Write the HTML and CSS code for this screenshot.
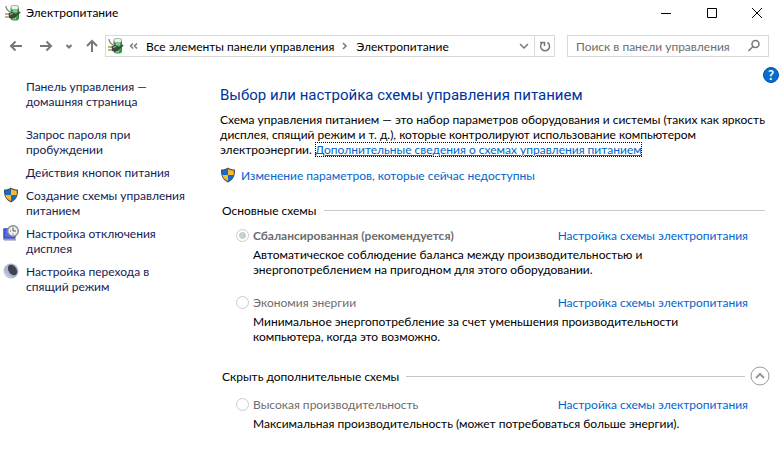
FILE: index.html
```html
<!DOCTYPE html>
<html lang="ru">
<head>
    <meta charset="UTF-8">
    <meta name="viewport" content="width=device-width, initial-scale=1.0">
    <title>Электропитание</title>
    <link rel="stylesheet" href="styles.css">
</head>

<body>
    <!-- Shared icons -->
    <svg class="sprite" aria-hidden="true">
        <symbol id="power" viewBox="0 0 16 16">
            <rect x="5.500" y="1" width="8.500" height="14.500" rx="3" fill="#3f7a46"/>
            <rect x="6.500" y="3" width="6.500" height="11.500" rx="2" fill="#2fae3f"/>
            <path d="M10 4.500v3M9 12v2.500" stroke="#6fe078" stroke-width="4"/>
            <rect x="6" y=".4" width="7.500" height="4.300" rx="2" fill="#eef3ee" stroke="#8b9a8b" stroke-width=".8"/>
            <path d="M1 1c0 3 1 4 4 6" fill="none" stroke="#777" stroke-width="1.200"/>
            <path d="M0 9h5M0 12h5" stroke="#b09a48" stroke-width="1.400"/>
            <path d="M3.500 8.500l3-1.500 3 1 1 1 4-2.500 1.200 1-4 3.500-2 2-3 .8-2.500-.8z" fill="#444"/>
            <path d="M5 9.500l3-1" stroke="#bbb"/>
        </symbol>
        <symbol id="shield" viewBox="0 0 16 16">
            <path d="M8 0.500C6 2 4 2.500 1 2.500C.8 8 2 12.500 8 15.500C14 12.500 15.200 8 15 2.500C12 2.500 10 2 8 .5z" fill="#4a4f55"/>
            <path d="M7.700 2C6 3 4 3.600 2.200 3.700L2.300 8H7.700z" fill="#0f6fd0"/>
            <path d="M8 2C10 3 12 3.600 13.800 3.700L13.700 8H8z" fill="#fdb82c"/>
            <path d="M2.300 8H8v6.200C4.500 12.500 2.800 10.500 2.300 8z" fill="#fdb82c"/>
            <path d="M8 8h5.700c-.5 2.500-2.200 4.500-5.700 6.200z" fill="#0f6fd0"/>
        </symbol>
    </svg>

    <header class="titlebar">
        <svg class="icon"><use href="#power"/></svg>
        <span class="title">Электропитание</span>
        <div class="window-buttons">
            <button type="button" aria-label="Свернуть"><svg viewBox="0 0 12 12"><path d="M1 6.500h10"/></svg></button>
            <button type="button" aria-label="Развернуть"><svg viewBox="0 0 12 12"><path d="M1.500 1.500h9v9h-9z"/></svg></button>
            <button type="button" aria-label="Закрыть"><svg viewBox="0 0 12 12"><path d="M1 1l10 10M11 1L1 11"/></svg></button>
        </div>
    </header>

    <nav class="navbar">
        <div class="history">
            <button type="button" aria-label="Назад"><svg viewBox="0 0 14 14"><path d="M13 7H2M6.500 2.500L2 7l4.500 4.500"/></svg></button>
            <button type="button" aria-label="Вперед"><svg viewBox="0 0 14 14"><path d="M1 7h11M7.500 2.500L12 7l-4.500 4.500"/></svg></button>
            <button type="button" class="recent" aria-label="Последние"><svg viewBox="0 0 14 14"><path d="M4.500 6L7 8.500 9.500 6"/></svg></button>
            <button type="button" aria-label="Вверх"><svg viewBox="0 0 14 14"><path d="M7 13V2M2 7l5-5 5 5"/></svg></button>
        </div>
        <div class="address">
            <svg class="icon"><use href="#power"/></svg>
            <svg class="crumb-sep" viewBox="0 0 10 10"><path d="M4 2.500L1.500 5 4 7.500M8 2.500L5.500 5 8 7.500"/></svg>
            <a href="#">Все элементы панели управления</a>
            <svg class="crumb-sep" viewBox="0 0 10 10"><path d="M4 2l3 3-3 3"/></svg>
            <a href="#">Электропитание</a>
            <button type="button" class="drop" aria-label="Предыдущие расположения"><svg viewBox="0 0 14 14"><path d="M3 5l4 4 4-4"/></svg></button>
            <button type="button" class="refresh" aria-label="Обновить"><svg viewBox="0 0 14 14"><path d="M9.500 3.500A4.500 4.500 0 1 1 4 4M2 3.500h4.500V7"/></svg></button>
        </div>
        <form class="search">
            <input type="search" placeholder="Поиск в панели управления" aria-label="Поиск в панели управления">
            <button type="button" aria-label="Найти"><svg viewBox="0 0 14 14"><circle cx="8.500" cy="5" r="3.500"/><path d="M6 7.500L1.500 12"/></svg></button>
        </form>
    </nav>

    <div class="content">
        <aside class="sidebar">
            <a class="home" href="#">Панель управления — домашняя страница</a>
            <a href="#">Запрос пароля при пробуждении</a>
            <a href="#">Действия кнопок питания</a>
            <a href="#">
                <svg class="icon"><use href="#shield"/></svg>
                Создание схемы управления питанием
            </a>
            <a href="#">
                <svg class="icon" viewBox="0 0 16 16">
                    <path d="M0 3h9l4 12H0z" fill="#9aa6e8"/>
                    <path d="M1 4h11v9H1z" fill="#5268e6" stroke="#3440b4"/>
                    <path d="M1 15h12" stroke="#8a8fa8"/>
                    <circle cx="10" cy="6" r="5.300" fill="#eef1f2" stroke="#858b8e" stroke-width="1.400"/>
                    <path d="M10 2.500V6h3M7 6h1M10 8.500v1" fill="none" stroke="#465057"/>
                </svg>
                Настройка отключения дисплея
            </a>
            <a href="#">
                <svg class="icon" viewBox="0 0 16 16">
                    <defs>
                        <linearGradient id="moon" x1="0" y1="1" x2="1" y2="0">
                            <stop offset="0" stop-color="#e6edf7"/>
                            <stop offset=".35" stop-color="#a7b6cd"/>
                            <stop offset="1" stop-color="#b4bac4"/>
                        </linearGradient>
                    </defs>
                    <circle cx="8" cy="8" r="7.500" fill="url(#moon)"/>
                    <ellipse cx="9.500" cy="7" rx="4" ry="5.800" transform="rotate(-35 9.500 7)" fill="#3d434e"/>
                </svg>
                Настройка перехода в спящий режим
            </a>
        </aside>

        <main class="main">
            <h1>Выбор или настройка схемы управления питанием</h1>
            <p class="intro">Схема управления питанием — это набор параметров оборудования и системы (таких как яркость дисплея, спящий режим и т. д.), которые контролируют использование компьютером электроэнергии. <a class="more" href="#">Дополнительные сведения о схемах управления питанием</a></p>
            <a class="unlock" href="#">
                <svg class="icon"><use href="#shield"/></svg>
                Изменение параметров, которые сейчас недоступны
            </a>

            <section class="group">
                <h2>Основные схемы</h2>
                <div class="plan">
                    <input type="radio" name="plan" id="balanced" checked disabled>
                    <label class="selected" for="balanced">Сбалансированная (рекомендуется)</label>
                    <a href="#">Настройка схемы электропитания</a>
                    <p>Автоматическое соблюдение баланса между производительностью и энергопотреблением на пригодном для этого оборудовании.</p>
                </div>
                <div class="plan">
                    <input type="radio" name="plan" id="saver" disabled>
                    <label for="saver">Экономия энергии</label>
                    <a href="#">Настройка схемы электропитания</a>
                    <p>Минимальное энергопотребление за счет уменьшения производительности компьютера, когда это возможно.</p>
                </div>
            </section>

            <section class="group extra">
                <h2>
                    Скрыть дополнительные схемы
                    <button type="button" aria-label="Скрыть"><svg viewBox="0 0 20 20"><circle cx="10" cy="10" r="9"/><path class="arrow" d="M6 12l4-4 4 4"/></svg></button>
                </h2>
                <div class="plan">
                    <input type="radio" name="plan" id="high" disabled>
                    <label for="high">Высокая производительность</label>
                    <a href="#">Настройка схемы электропитания</a>
                    <p>Максимальная производительность (может потребоваться больше энергии).</p>
                </div>
            </section>
        </main>

        <button type="button" class="help" aria-label="Справка">?</button>
    </div>
</body>
</html>
```
FILE: styles.css
```css
* {
    box-sizing: border-box;
}

body {
    margin: 0;
    background-color: #fff;
    color: #000;
    font-family: Lato, "Open Sans", sans-serif;
    font-size: 12px;
    line-height: 15px;
}

a {
    color: #0066cc;
    text-decoration: none;
}

button {
    display: flex;
    align-items: center;
    justify-content: center;
    padding: 0;
    border: 0;
    background: none;
    font-family: inherit;
}

button svg,
.crumb-sep {
    fill: none;
    stroke: #777;
    stroke-width: 1.5;
}

.sprite {
    display: none;
}

.icon {
    width: 16px;
    height: 16px;
    flex: none;
}

/* Title bar */
.titlebar {
    display: flex;
    align-items: center;
    height: 25px;
    padding-left: 5px;
}

.title {
    margin-left: 5px;
}

.window-buttons {
    display: flex;
    margin-left: auto;
}

.window-buttons button {
    width: 46px;
    height: 25px;
}

.window-buttons button:last-child {
    width: 44px;
}

.window-buttons svg {
    width: 12px;
    height: 12px;
    stroke: #000;
    stroke-width: 1;
}

/* Navigation */
.navbar {
    display: flex;
    align-items: center;
    margin-top: 10px;
    padding: 0 10px 0 8px;
}

.history {
    display: flex;
    width: 97px;
}

.history button {
    width: 16px;
    margin-right: 14px;
}

.history button:nth-child(2),
.history .recent {
    margin-right: 8px;
}

.history button:last-child {
    margin-right: 0;
}

.history svg,
.address button svg,
.search svg {
    width: 14px;
    height: 14px;
    flex: none;
}

.history svg {
    stroke-width: 2;
}

.history .recent {
    width: 14px;
}

.address,
.search {
    display: flex;
    align-items: center;
    height: 22px;
    border: 1px solid #d9d9d9;
}

.address {
    flex: 1;
    padding-left: 2px;
}

.address a {
    color: #000;
}

.crumb-sep {
    width: 10px;
    height: 10px;
    margin: 0 7px 0 5px;
}

.drop {
    width: 20px;
    margin-left: auto;
}

.refresh {
    width: 20px;
    height: 20px;
    border-left: 1px solid #d9d9d9;
}

.search {
    width: 202px;
    margin-left: 12px;
    padding: 0 6px 0 8px;
}

.search input {
    flex: 1;
    min-width: 0;
    padding: 0;
    border: 0;
    outline: 0;
    font: inherit;
}

.search input::placeholder {
    color: #6d6d6d;
}

.search button {
    width: 16px;
}

/* Content */
.content {
    display: flex;
    position: relative;
    padding-top: 22px;
}

.sidebar {
    display: flex;
    flex-direction: column;
    gap: 8px;
    width: 220px;
    flex: none;
    padding: 0 30px 0 26px;
}

.sidebar a {
    position: relative;
    color: #151c55;
}

.sidebar .home {
    margin-bottom: 10px;
}

/* icons hang in the left margin of the list */
.sidebar .icon {
    position: absolute;
    left: -23px;
    top: -1px;
}

.main {
    flex: 1;
    min-width: 0;
    padding: 6px 9px 0 0;
}

h1 {
    margin: 0;
    color: #003399;
    font-family: Roboto, sans-serif;
    font-size: 15px;
    font-weight: normal;
    line-height: 20px;
}

.intro {
    margin: 7px 0 0;
}

.more {
    outline: 1px dotted #000;
    outline-offset: -1px;
    text-decoration: underline;
}

.unlock {
    display: flex;
    align-items: center;
    gap: 5px;
    margin-top: 10px;
}

.group {
    margin-top: 17px;
}

.group h2 {
    display: flex;
    align-items: center;
    height: 20px;
    margin: 0 5px 8px 2px;
    font-size: 12px;
    font-weight: normal;
}

.group h2::after {
    content: "";
    flex: 1;
    height: 1px;
    margin-left: 7px;
    background-color: #c8c8c8;
}

.extra {
    margin-top: 22px;
}

.extra h2 {
    margin-right: 0;
    margin-bottom: 11px;
}

.extra h2 button {
    order: 1;
    margin-left: 5px;
}

.extra h2 svg {
    width: 20px;
    height: 20px;
    stroke: #999;
    stroke-width: 1;
}

.extra h2 .arrow {
    stroke-width: 2;
}

.plan {
    display: grid;
    grid-template-columns: 17px 1fr auto;
    align-items: center;
    row-gap: 4px;
    margin: 0 22px 18px 16px;
}

.plan input {
    appearance: none;
    width: 13px;
    height: 13px;
    margin: 0;
    border: 1px solid #ccc;
    border-radius: 50%;
}

.plan input:checked {
    background: radial-gradient(circle, #ccc 3px, #fff 4px);
}

.plan label {
    color: #6d6d6d;
}

.plan .selected {
    font-weight: bold;
}

.plan p {
    grid-column: 2 / -1;
    max-width: 440px;
    margin: 0;
}

.help {
    position: absolute;
    top: 10px;
    right: 0;
    width: 16px;
    height: 16px;
    border: 1px solid #00529e;
    border-radius: 50%;
    background-color: #0a6ccd;
    color: #fff;
    font-size: 13px;
    font-weight: bold;
}
```
